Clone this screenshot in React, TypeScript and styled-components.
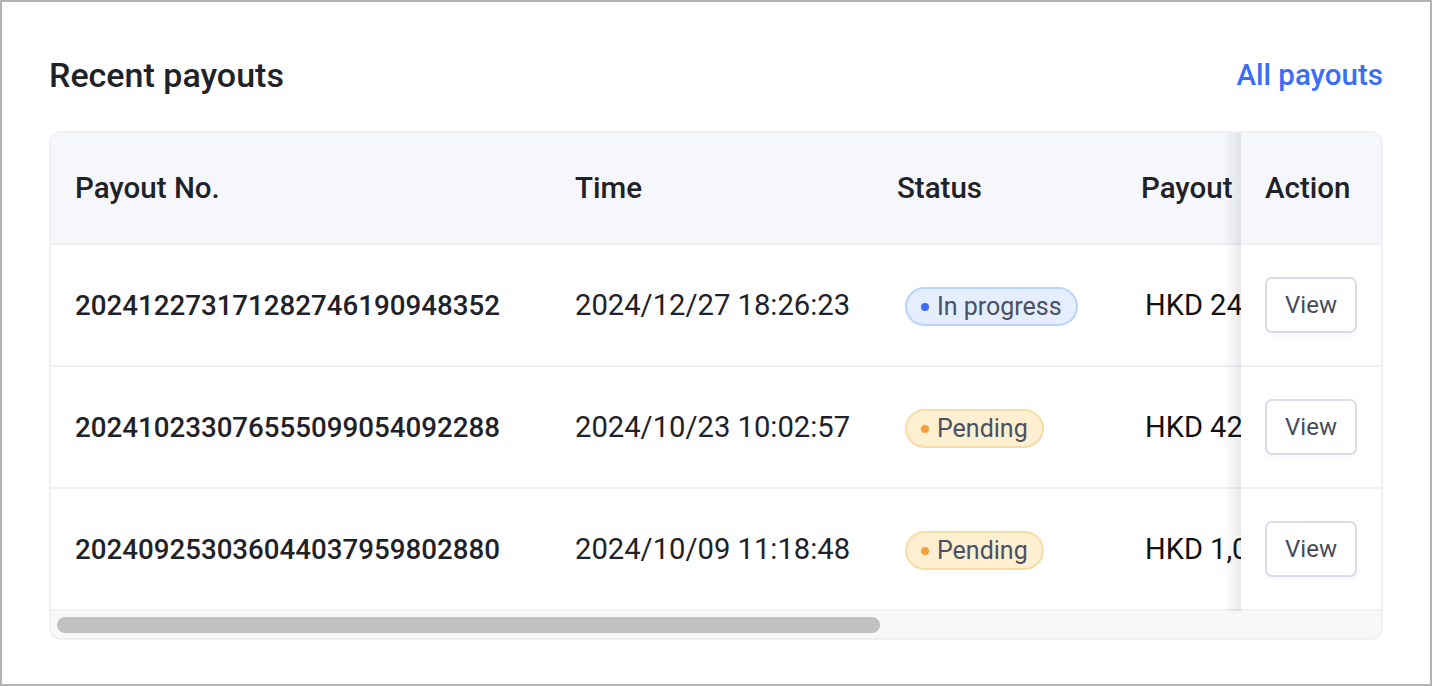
import styled, { createGlobalStyle } from "styled-components";

const GlobalStyle = createGlobalStyle`
  * { box-sizing: border-box; }
  body {
    margin: 0;
    font-family: Roboto, "Liberation Sans", Arial, sans-serif;
    color: #1f2329;
    background: #ffffff;
  }
`;

const Frame = styled.div`
  width: 1432px;
  height: 686px;
  border: 2px solid #b4b4b4;
  padding: 52px 47px 0 47px;
  display: flex;
  flex-direction: column;
  gap: 35px;
  background: #fff;
`;

const TitleRow = styled.div`
  display: flex;
  justify-content: space-between;
  align-items: center;
  height: 42px;
`;

const Title = styled.h2`
  margin: 0;
  font-size: 34px;
  font-weight: 500;
  color: #1f2329;
`;

const AllLink = styled.a`
  font-size: 29.5px;
  font-weight: 500;
  color: #3a6ef6;
  text-decoration: none;
  cursor: pointer;
`;

const Card = styled.div`
  border: 2px solid #eef0f5;
  border-radius: 12px;
  overflow: hidden;
  display: flex;
  flex-direction: column;
`;

const Viewport = styled.div`
  overflow: hidden;
`;

const Table = styled.table`
  width: 1470px;
  border-collapse: separate;
  border-spacing: 0;
  table-layout: fixed;
`;

const stickyCell = `
  position: sticky;
  right: 0;
  &::before {
    content: "";
    position: absolute;
    top: 0;
    bottom: -2px;
    left: -18px;
    width: 18px;
    background: linear-gradient(to right, rgba(30, 35, 55, 0), rgba(30, 35, 55, 0.09));
    pointer-events: none;
  }
`;

const Th = styled.th<{ $w: number; $sticky?: boolean }>`
  width: ${({ $w }) => $w}px;
  height: 112px;
  padding: 0 0 0 24px;
  text-align: left;
  font-size: 29.5px;
  font-weight: 500;
  color: #1f2329;
  background: #f5f7fb;
  border-bottom: 2px solid #eef0f5;
  white-space: nowrap;
  overflow: ${({ $sticky }) => ($sticky ? "visible" : "hidden")};
  ${({ $sticky }) => $sticky && stickyCell}
`;

const Td = styled.td<{ $sticky?: boolean }>`
  height: 122px;
  padding: 0 0 0 24px;
  border-bottom: 2px solid #eef0f5;
  white-space: nowrap;
  overflow: ${({ $sticky }) => ($sticky ? "visible" : "hidden")};
  font-size: 29px;
  background: #fff;
  ${({ $sticky }) => $sticky && stickyCell}
`;

const PayoutNo = styled.span`
  font-size: 27.7px;
  font-weight: 500;
  color: #1f2329;
`;

const Time = styled.span`
  font-size: 29.2px;
  color: #1f2329;
`;

const Amount = styled.span`
  margin-left: 4px;
  color: #111;
`;

const Badge = styled.span<{ $tone: "blue" | "orange" }>`
  display: inline-flex;
  align-items: center;
  gap: 8px;
  margin-left: 8px;
  height: 39px;
  padding: 0 14px;
  border-radius: 20px;
  font-size: 25px;
  color: #4a5163;
  background: ${({ $tone }) => ($tone === "blue" ? "#e4eeff" : "#fdefcf")};
  border: 2px solid ${({ $tone }) => ($tone === "blue" ? "#bcd3fb" : "#f8dca8")};
  &::before {
    content: "";
    width: 8px;
    height: 8px;
    border-radius: 50%;
    background: ${({ $tone }) => ($tone === "blue" ? "#3a6ef6" : "#f5a03c")};
  }
`;

const ViewButton = styled.button`
  width: 92px;
  height: 56px;
  border: 2px solid #d9dce8;
  border-radius: 7px;
  background: #fff;
  font-family: inherit;
  font-size: 24px;
  color: #454b5b;
  box-shadow: 0 3px 4px rgba(30, 40, 80, 0.04);
  cursor: pointer;
`;

const ScrollTrack = styled.div`
  height: 27px;
  background: #f8f8f8;
  padding: 6px 6px 0 6px;
`;

const ScrollThumb = styled.div<{ $ratio: number }>`
  width: ${({ $ratio }) => $ratio * 100}%;
  height: 16px;
  border-radius: 8px;
  background: #c1c1c1;
`;

type Row = {
  no: string;
  time: string;
  status: "In progress" | "Pending";
  amount: string;
};

const rows: Row[] = [
  { no: "202412273171282746190948352", time: "2024/12/27 18:26:23", status: "In progress", amount: "HKD 24,650.00" },
  { no: "202410233076555099054092288", time: "2024/10/23 10:02:57", status: "Pending", amount: "HKD 42,000.00" },
  { no: "202409253036044037959802880", time: "2024/10/09 11:18:48", status: "Pending", amount: "HKD 1,050.00" },
];

export default function App() {
  return (
    <>
      <GlobalStyle />
      <Frame>
        <TitleRow>
          <Title>Recent payouts</Title>
          <AllLink>All payouts</AllLink>
        </TitleRow>
        <Card>
          <Viewport>
            <Table>
              <thead>
                <tr>
                  <Th $w={500}>Payout No.</Th>
                  <Th $w={322}>Time</Th>
                  <Th $w={244}>Status</Th>
                  <Th $w={264}>Payout</Th>
                  <Th $w={140} $sticky>
                    Action
                  </Th>
                </tr>
              </thead>
              <tbody>
                {rows.map((r) => (
                  <tr key={r.no}>
                    <Td>
                      <PayoutNo>{r.no}</PayoutNo>
                    </Td>
                    <Td>
                      <Time>{r.time}</Time>
                    </Td>
                    <Td>
                      <Badge $tone={r.status === "In progress" ? "blue" : "orange"}>{r.status}</Badge>
                    </Td>
                    <Td>
                      <Amount>{r.amount}</Amount>
                    </Td>
                    <Td $sticky>
                      <ViewButton>View</ViewButton>
                    </Td>
                  </tr>
                ))}
              </tbody>
            </Table>
          </Viewport>
          <ScrollTrack>
            <ScrollThumb $ratio={0.6245} />
          </ScrollTrack>
        </Card>
      </Frame>
    </>
  );
}
